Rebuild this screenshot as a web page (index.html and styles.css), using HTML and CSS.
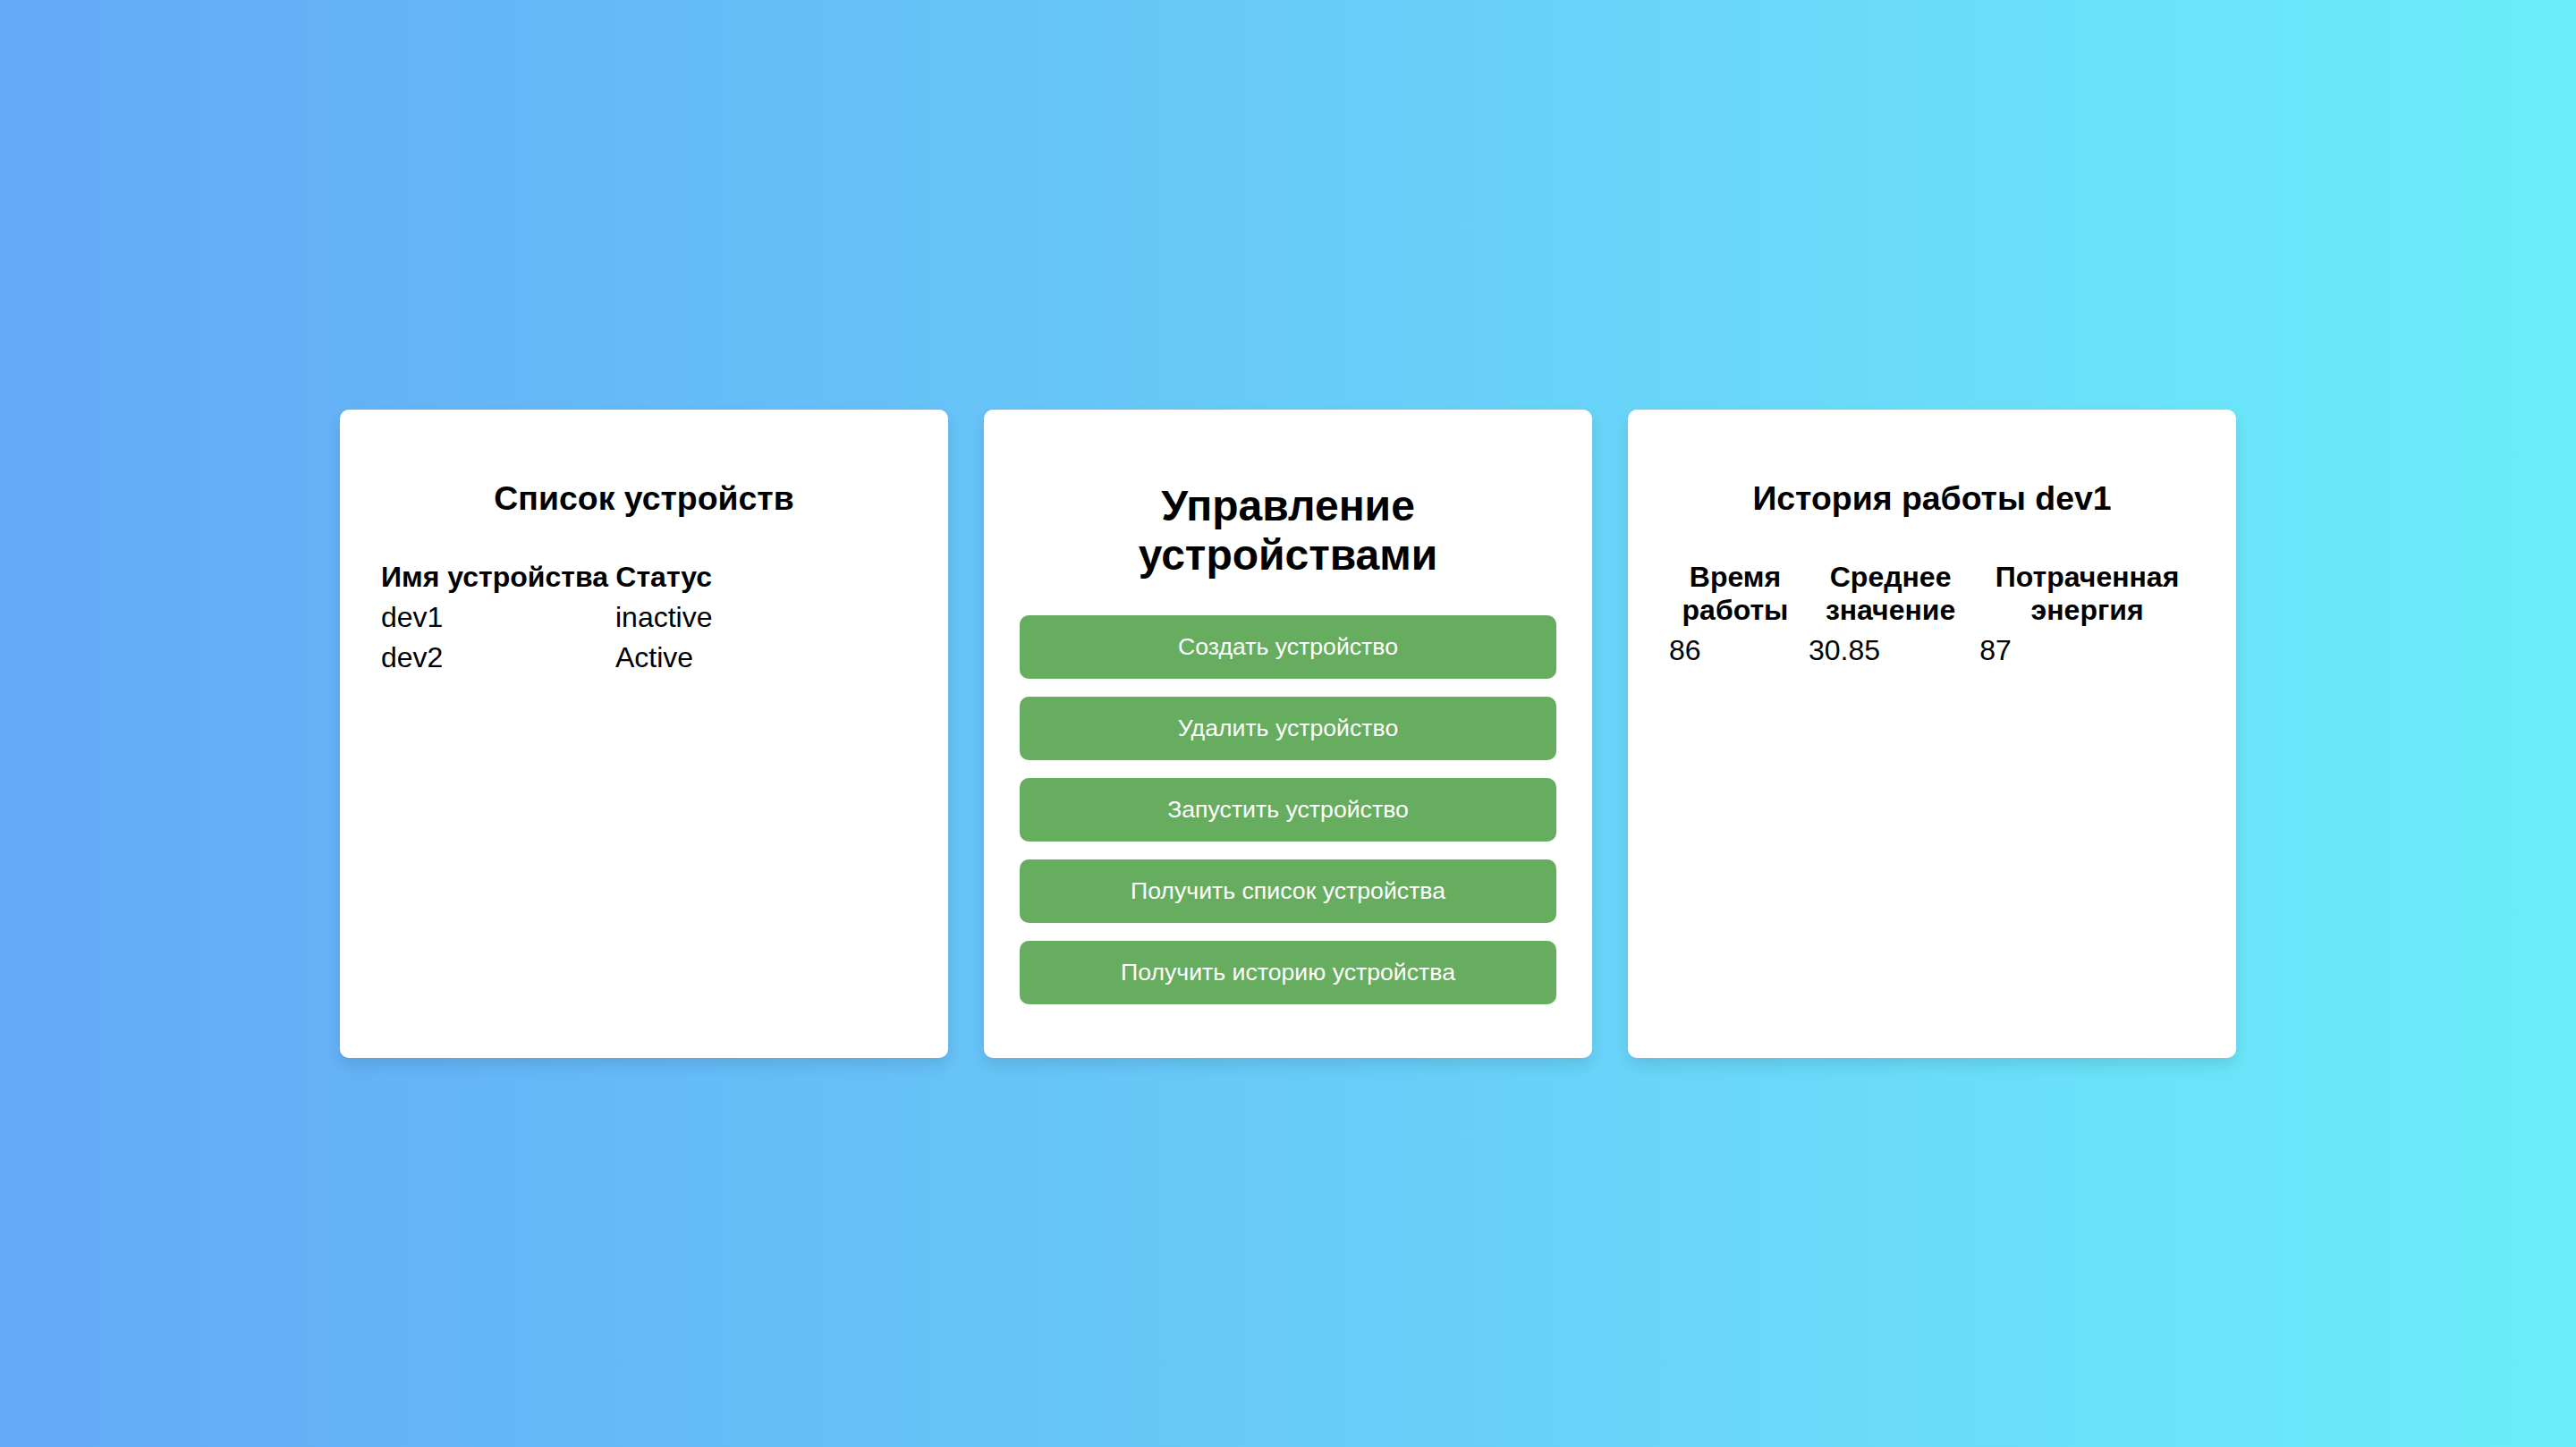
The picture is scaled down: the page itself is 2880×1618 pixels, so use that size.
FILE: index.html
```html
<!DOCTYPE html>
<html lang="ru">
<head>
    <meta charset="UTF-8">
    <meta name="viewport" content="width=device-width, initial-scale=1.0">
    <title>Устройства</title>
    <link rel="stylesheet" href="styles.css">
</head>
<body>
    <main class="dashboard">
        <section class="panel">
            <h3 class="panel__title">Список устройств</h3>
            <table class="data-table">
                <thead>
                    <tr>
                        <th>Имя устройства</th>
                        <th>Статус</th>
                    </tr>
                </thead>
                <tbody>
                    <tr>
                        <td>dev1</td>
                        <td>inactive</td>
                    </tr>
                    <tr>
                        <td>dev2</td>
                        <td>Active</td>
                    </tr>
                </tbody>
            </table>
        </section>

        <section class="panel">
            <h2 class="panel__title panel__title--big">Управление устройствами</h2>
            <button class="action">Создать устройство</button>
            <button class="action">Удалить устройство</button>
            <button class="action">Запустить устройство</button>
            <button class="action">Получить список устройства</button>
            <button class="action">Получить историю устройства</button>
        </section>

        <section class="panel">
            <h3 class="panel__title">История работы dev1</h3>
            <table class="data-table">
                <thead>
                    <tr>
                        <th>Время работы</th>
                        <th>Среднее значение</th>
                        <th>Потраченная энергия</th>
                    </tr>
                </thead>
                <tbody>
                    <tr>
                        <td>86</td>
                        <td>30.85</td>
                        <td>87</td>
                    </tr>
                </tbody>
            </table>
        </section>
    </main>
</body>
</html>
```

FILE: styles.css
```css
* {
	box-sizing: border-box;
	margin: 0;
	padding: 0;
}

:root {
	--radius: 10px;
	--green: #67ad5f;
	--text: #000;
}

body {
	min-height: 100vh;
	padding-top: 23px;
	display: flex;
	align-items: center;
	justify-content: center;
	font-family: "Liberation Sans", Arial, sans-serif;
	font-size: 32px;
	color: var(--text);
	background: linear-gradient(to right, #63a9f6, #6cedfa);
}

/* cards in a row, all as tall as the tallest one */
.dashboard {
	display: flex;
	gap: 40px;
}

.panel {
	width: 680px;
	padding: 40px;
	background-color: #fff;
	border-radius: var(--radius);
	box-shadow: 0 8px 16px rgba(0, 0, 0, 0.1);
}

.panel__title {
	text-align: center;
	font-size: 37.44px;
	font-weight: bold;
	margin: 37.44px 0 42.5px;
}

.panel__title--big {
	font-size: 48px;
	margin: 39.84px 0;
}

/* tables keep the browser look, just doubled */
.data-table {
	border-spacing: 4px;
}

.data-table th,
.data-table td {
	padding: 2px;
}

.data-table td {
	text-align: left;
}

.action {
	display: block;
	width: 100%;
	margin: 20px 0;
	padding: 20px;
	border: 0;
	border-radius: var(--radius);
	background-color: var(--green);
	color: #fff;
	font-family: "Liberation Sans", Arial, sans-serif;
	font-size: 26.67px;
	cursor: pointer;
}
```
